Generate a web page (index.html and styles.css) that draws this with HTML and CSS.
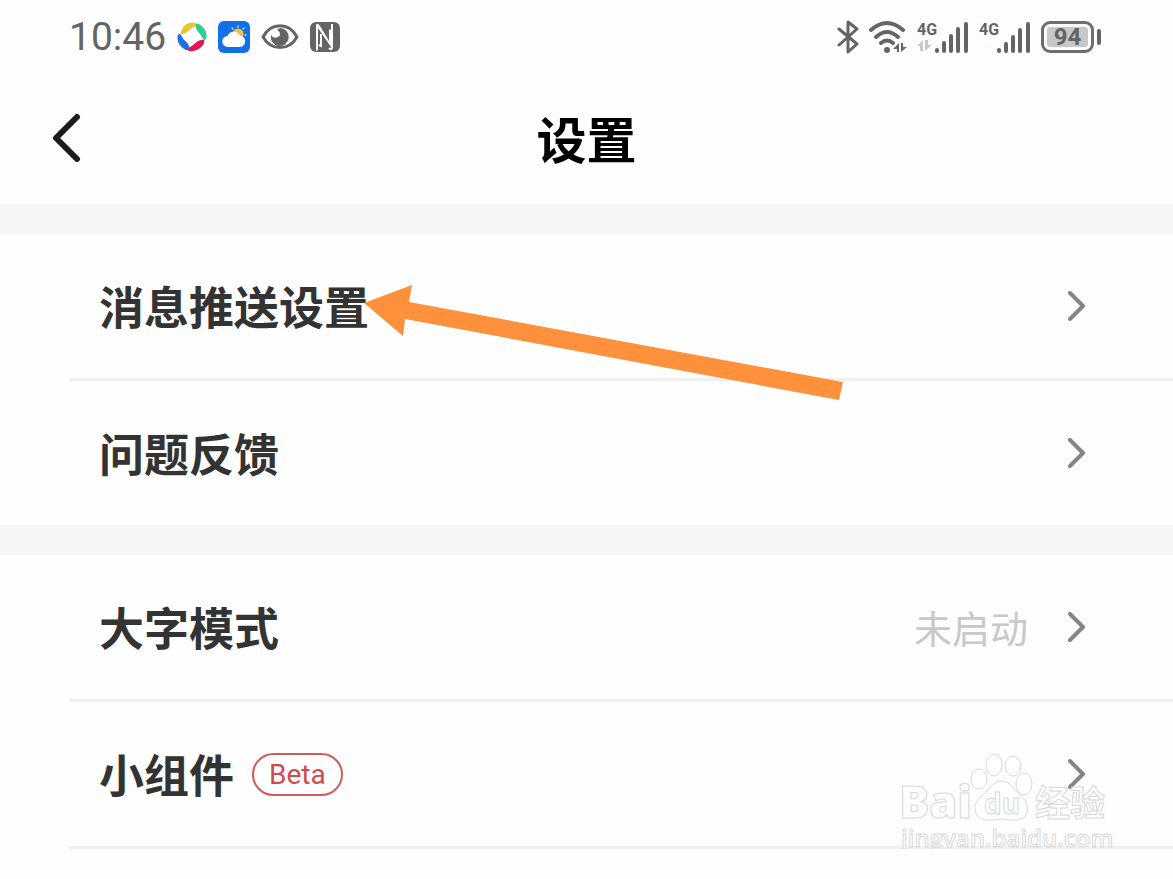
FILE: index.html
```
<!DOCTYPE html>
<html lang="zh-CN">
<head>
  <meta charset="UTF-8">
  <title>设置</title>
  <meta name="viewport" content="width=device-width, initial-scale=1.0">
  <link rel="stylesheet" href="styles.css">
</head>
<body>
  <div class="status-bar">
    <div class="status-left">
      <span class="time">10:46</span>
      <svg width="30" height="32" viewBox="0 0 30 32">
        <path d="M4 11C6 4 12 0 19 2C21 3 20 5 17 6C13 7 11 12 6 13C3 14 3 13 4 11Z" fill="#e9c52d"/>
        <path d="M22 3C27 6 31 12 29 18C28 20 26 19 25 16C24 13 20 11 19 7C18 4 19 2 22 3Z" fill="#2fcf93"/>
        <path d="M27 22C25 27 19 31 12 30C9 29 10 27 13 26C17 24 19 20 24 19C27 18 28 19 27 22Z" fill="#e0184f"/>
        <path d="M9 29C3 26 -1 20 1 14C2 12 4 13 5 16C7 20 11 21 12 25C12 28 11 30 9 29Z" fill="#1d6fe0"/>
      </svg>
      <svg width="32" height="32" viewBox="0 0 32 32">
        <rect width="32" height="32" rx="6" fill="#1170ea"/>
        <g stroke="#e9cf7a" stroke-width="1.5" stroke-linecap="round">
          <path d="M20 5v1M14 7l1 1M26 7l-1 1M28 14h-1M26 19l-1-1"/>
        </g>
        <circle cx="20" cy="13" r="5.5" fill="#f5c04a"/>
        <path d="M10 26a5.500 5.500 0 0 1-.5-11a6.500 6.500 0 0 1 12-.5a5.800 5.800 0 0 1 1 11.500Z" fill="#fff"/>
      </svg>
      <svg width="38" height="28" viewBox="0 0 38 28">
        <path d="M2 14C10 -1 28 -1 36 14C28 28 10 28 2 14Z" fill="none" stroke="#646464" stroke-width="3" stroke-linejoin="round"/>
        <path d="M19 5A9 9 0 1 1 10 12A5 5 0 0 0 19 12C19 9 18 8 16 7Z" fill="#646464"/>
      </svg>
      <svg width="30" height="30" viewBox="0 0 30 30">
        <rect width="30" height="30" rx="6" fill="#646464"/>
        <path d="M6 29V3Q7 0 10 4L19 19V7L21 8V25L8 6V28Z" fill="#fefefe"/>
        <path d="M11 12V24L9 23M22 2V25Q22 29 19 26" fill="none" stroke="#fefefe" stroke-width="2"/>
      </svg>
    </div>
    <div class="status-right">
      <svg width="22" height="34" viewBox="0 0 22 34">
        <path d="M2 9L20 24L11 32V2L20 9L2 25" fill="none" stroke="#646464" stroke-width="3" stroke-linecap="round" stroke-linejoin="round"/>
      </svg>
      <svg width="38" height="34" viewBox="0 0 38 34">
        <g fill="none" stroke="#646464" stroke-width="4" stroke-linecap="round">
          <path d="M2 10Q18 -4 34 10"/>
          <path d="M7 17Q18 7 29 17"/>
          <path d="M12 23Q18 18 24 23"/>
        </g>
        <circle cx="18" cy="30" r="3" fill="#646464"/>
        <path d="M24 29L30 23V32H28V29ZM32 23V32L38 27H34V23Z" fill="#646464"/>
      </svg>
      <svg class="signal" width="52" height="34" viewBox="0 0 52 34">
        <text x="0" y="15">4G</text>
        <path d="M0 26L6 20V31H3V26ZM8 20V31L15 25H11V20Z" fill="#c8c8c8"/>
        <path d="M20 30v1M27 23v8M34 16v15M41 9v22M49 4v27"/>
      </svg>
      <svg class="signal" width="52" height="34" viewBox="0 0 52 34">
        <text x="0" y="15">4G</text>
        <path d="M20 30v1M27 24v7M34 17v14M41 10v21M49 4v27"/>
      </svg>
      <div class="battery"><span class="battery-level">94</span></div>
    </div>
  </div>

  <header class="header">
    <button class="back" type="button" aria-label="返回">
      <svg width="32" height="50" viewBox="0 0 32 50">
        <path d="M27 5L6 26L27 47" fill="none" stroke="#1c1c1c" stroke-width="6" stroke-linecap="round" stroke-linejoin="round"/>
      </svg>
    </button>
    <h1>设置</h1>
  </header>

  <main>
    <nav class="group">
      <a class="row" href="#push">
        <span class="label">消息推送设置</span>
        <svg class="chevron" viewBox="0 0 18 30"><path d="M2 2L15 15L2 28"/></svg>
      </a>
      <a class="row" href="#feedback">
        <span class="label">问题反馈</span>
        <svg class="chevron" viewBox="0 0 18 30"><path d="M2 2L15 15L2 28"/></svg>
      </a>
    </nav>
    <nav class="group last-group">
      <a class="row" href="#font">
        <span class="label">大字模式</span>
        <span class="value">未启动</span>
        <svg class="chevron" viewBox="0 0 18 30"><path d="M2 2L15 15L2 28"/></svg>
      </a>
      <a class="row" href="#widget">
        <span class="label">小组件</span>
        <span class="beta">Beta</span>
        <svg class="chevron" viewBox="0 0 18 30"><path d="M2 2L15 15L2 28"/></svg>
      </a>
    </nav>
  </main>

  <!-- arrow pointing at the first row -->
  <svg class="arrow" width="480" height="116" viewBox="0 0 480 116">
    <path d="M0 19L48 1L45 18L479 98L475 116L41 35L39 52Z" fill="#ff913c"/>
  </svg>

  <svg class="watermark" width="216" height="112" viewBox="0 0 216 112">
    <text class="wm-latin" x="2" y="70">Bai</text>
    <g class="wm-paw">
      <ellipse cx="82" cy="31" rx="8" ry="10"/>
      <ellipse cx="97" cy="17" rx="8" ry="11"/>
      <ellipse cx="116" cy="18" rx="8" ry="10"/>
      <ellipse cx="127" cy="36" rx="8" ry="11"/>
      <path d="M104 33C97 33 94 40 86 47C74 55 76 71 89 72C96 73 98 71 104 71C110 71 113 73 120 72C134 70 133 55 123 47C116 40 113 33 104 33Z"/>
    </g>
    <text class="wm-du" x="87" y="66">du</text>
    <text class="wm-cjk" x="138" y="68">经验</text>
    <text class="wm-url" x="4" y="99">jingyan.baidu.com</text>
  </svg>
</body>
</html>
```

FILE: styles.css
```
* {
  box-sizing: border-box;
}
html, body {
  margin: 0;
  padding: 0;
}
body {
  position: relative;
  background-color: #fefefe;
  font-family: "Noto Sans CJK SC", sans-serif;
  color: #333;
}
.status-bar {
  display: flex;
  justify-content: space-between;
  align-items: center;
  height: 74px;
  padding: 0 72px 0 69px;
  color: #646464;
  font-family: Roboto, sans-serif;
}
.status-left {
  display: flex;
  align-items: center;
  gap: 11px;
}
.status-right {
  display: flex;
  align-items: center;
  gap: 10px;
}
.time {
  font-size: 39px;
  line-height: 40px;
}
.signal path {
  stroke: #646464;
  stroke-width: 4px;
  stroke-linecap: round;
}
.signal path[fill] {
  stroke: none;
}
.signal text {
  fill: #646464;
  font-size: 16px;
  font-weight: 700;
}
.battery {
  display: flex;
  align-items: center;
  width: 53px;
  height: 32px;
  margin-right: 7px;
  padding: 3px;
  border: 3px solid #6e6e6e;
  border-radius: 9px;
  position: relative;
}
.battery::after {
  content: "";
  position: absolute;
  right: -10px;
  top: 5px;
  width: 4px;
  height: 16px;
  border-radius: 2px;
  background-color: #646464;
}
.battery-level {
  flex: 1;
  border-radius: 3px;
  background-color: #c8c8c8;
  font-size: 24px;
  font-weight: 700;
  line-height: 20px;
  text-align: center;
}
.header {
  display: grid;
  grid-template-columns: 1fr auto 1fr;
  align-items: center;
  height: 130px;
  padding: 0 50px 4px;
}
.back {
  display: flex;
  justify-self: start;
  padding: 0;
  border: 0;
  background: none;
}
h1 {
  margin: 0;
  font-size: 50px;
  line-height: 74px;
  color: #000;
}
.group {
  border-top: 30px solid #f5f5f5;
}
.row {
  display: flex;
  align-items: center;
  height: 144px;
  margin-left: 69px;
  padding: 0 87px 0 30px;
  color: #333;
  text-decoration: none;
}
.row + .row {
  height: 147px;
  border-top: 3px solid #f0f0f0;
}
.last-group .row:last-child {
  height: 150px;
  border-bottom: 3px solid #f0f0f0;
}
.label {
  font-size: 45px;
  font-weight: 700;
  line-height: 66px;
}
.value {
  margin-left: auto;
  font-size: 38px;
  line-height: 56px;
  color: #c8c8c8;
}
.beta {
  margin-left: 18px;
  padding: 0 15px;
  border: 2px solid #cf5b5f;
  border-radius: 22px;
  font-family: Roboto, sans-serif;
  font-size: 28px;
  line-height: 39px;
  color: #cf4b50;
}
.chevron {
  width: 18px;
  height: 30px;
  margin-left: auto;
  fill: none;
  stroke: #858585;
  stroke-width: 4px;
  stroke-linecap: round;
  stroke-linejoin: round;
}
.value + .chevron {
  margin-left: 40px;
}
.arrow {
  position: absolute;
  left: 364px;
  top: 284px;
}
.watermark {
  position: absolute;
  left: 897px;
  top: 748px;
  fill: rgba(255, 255, 255, 0.6);
  stroke: #d8d8d8;
  stroke-width: 1px;
  font-family: "Open Sans", sans-serif;
}
.wm-latin {
  font-size: 45px;
  font-weight: 800;
}
.wm-du {
  font-size: 28px;
  font-weight: 700;
}
.wm-cjk {
  font-family: "Noto Sans CJK SC", sans-serif;
  font-size: 35px;
  font-weight: 700;
}
.wm-url {
  font-size: 24px;
  font-weight: 600;
}
```
